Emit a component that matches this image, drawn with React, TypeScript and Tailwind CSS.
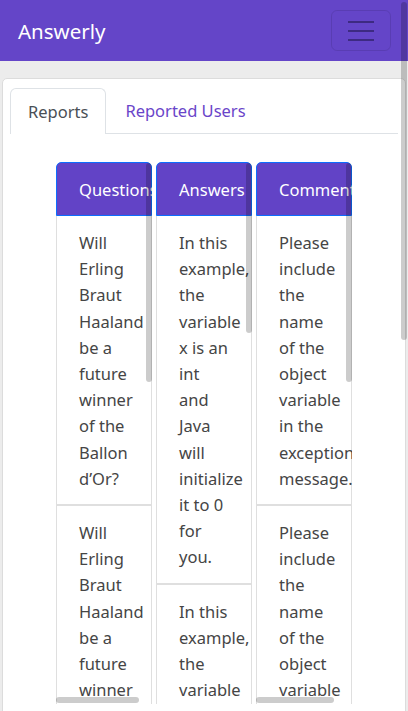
import React from "react";

const FONT = { fontFamily: '"Noto Sans", "Open Sans", sans-serif' };

const q = ["Will", "Erling", "Braut", "Haaland", "be a", "future", "winner", "of the", "Ballon", "d’Or?"];
const a = ["In this", "example,", "the", "variable", "x is an", "int", "and", "Java", "will", "initialize", "it to 0", "for", "you."];
const c = ["Please", "include", "the", "name", "of the", "object", "variable", "in the", "exception", "message."];

const cols: { title: string; rows: string[][]; vThumb: number; hThumb: number | null }[] = [
  { title: "Questions", rows: [q, q, q], vThumb: 219, hThumb: 83 },
  { title: "Answers", rows: [a, a], vThumb: 170, hThumb: null },
  { title: "Comments", rows: [c, c, c], vThumb: 219, hThumb: 78 },
];

function Column({ col }: { col: (typeof cols)[number] }) {
  return (
    <div className="relative w-[96px] h-[542px] overflow-hidden rounded-t-[5px] shrink-0">
      <div className="h-[54px] bg-[#6243c6] border border-[#0d6efd] rounded-t-[5px] flex items-center pl-[22px] pt-[2px] text-white text-[16.5px] whitespace-nowrap">
        {col.title}
      </div>
      {col.rows.map((lines, i) => (
        <div
          key={i}
          className="border-x border-b-2 border-[#dfdfdf] pl-[22px] pt-[14px] pb-[12px] text-[16.5px] leading-[26.2px] text-[#454545] whitespace-nowrap"
        >
          {lines.map((l, j) => (
            <div key={j}>{l}</div>
          ))}
        </div>
      ))}
      <div
        className="absolute right-0 top-[1px] w-[6px] rounded-full bg-black/20"
        style={{ height: col.vThumb }}
      />
      {col.hThumb !== null && (
        <div
          className="absolute left-0 bottom-[1px] h-[6px] rounded-full bg-black/20"
          style={{ width: col.hThumb }}
        />
      )}
    </div>
  );
}

export default function App() {
  return (
    <div className="relative h-[711px] overflow-hidden bg-[#ececec]" style={FONT}>
      <nav className="h-[61px] bg-[#6445c8] flex items-center justify-between pl-[18px] pr-[17px]">
        <span className="text-white text-[20.5px] leading-none pt-[1px]">Answerly</span>
        <button className="w-[60px] h-[41px] rounded-[6px] border border-black/10 flex flex-col items-center justify-center gap-[7px]">
          <span className="block w-[26px] h-[2px] bg-[#3d2a82]" />
          <span className="block w-[26px] h-[2px] bg-[#3d2a82]" />
          <span className="block w-[26px] h-[2px] bg-[#3d2a82]" />
        </button>
      </nav>
      <div className="pt-[17px] pl-[2px] pr-[2px] h-full">
        <div className="bg-white border border-[#dcdcdc] rounded-t-[5px] h-full px-[7px] pt-[9px]">
          <div className="flex border-b border-[#dee2e6] h-[46px] text-[16.5px]">
            <div className="px-[17px] pt-[1px] flex items-center border border-b-0 border-[#dee2e6] rounded-t-[6px] bg-white text-[#4a4f55] -mb-px">
              Reports
            </div>
            <div className="px-[19px] pt-[1px] flex items-center text-[#6a45c9]">Reported Users</div>
          </div>
          <div className="flex justify-center gap-[4px] mt-[28px]">
            {cols.map((col) => (
              <Column key={col.title} col={col} />
            ))}
          </div>
        </div>
      </div>
      <div className="absolute right-[1px] top-[2px] w-[6px] h-[338px] rounded-full bg-black/20" />
    </div>
  );
}
